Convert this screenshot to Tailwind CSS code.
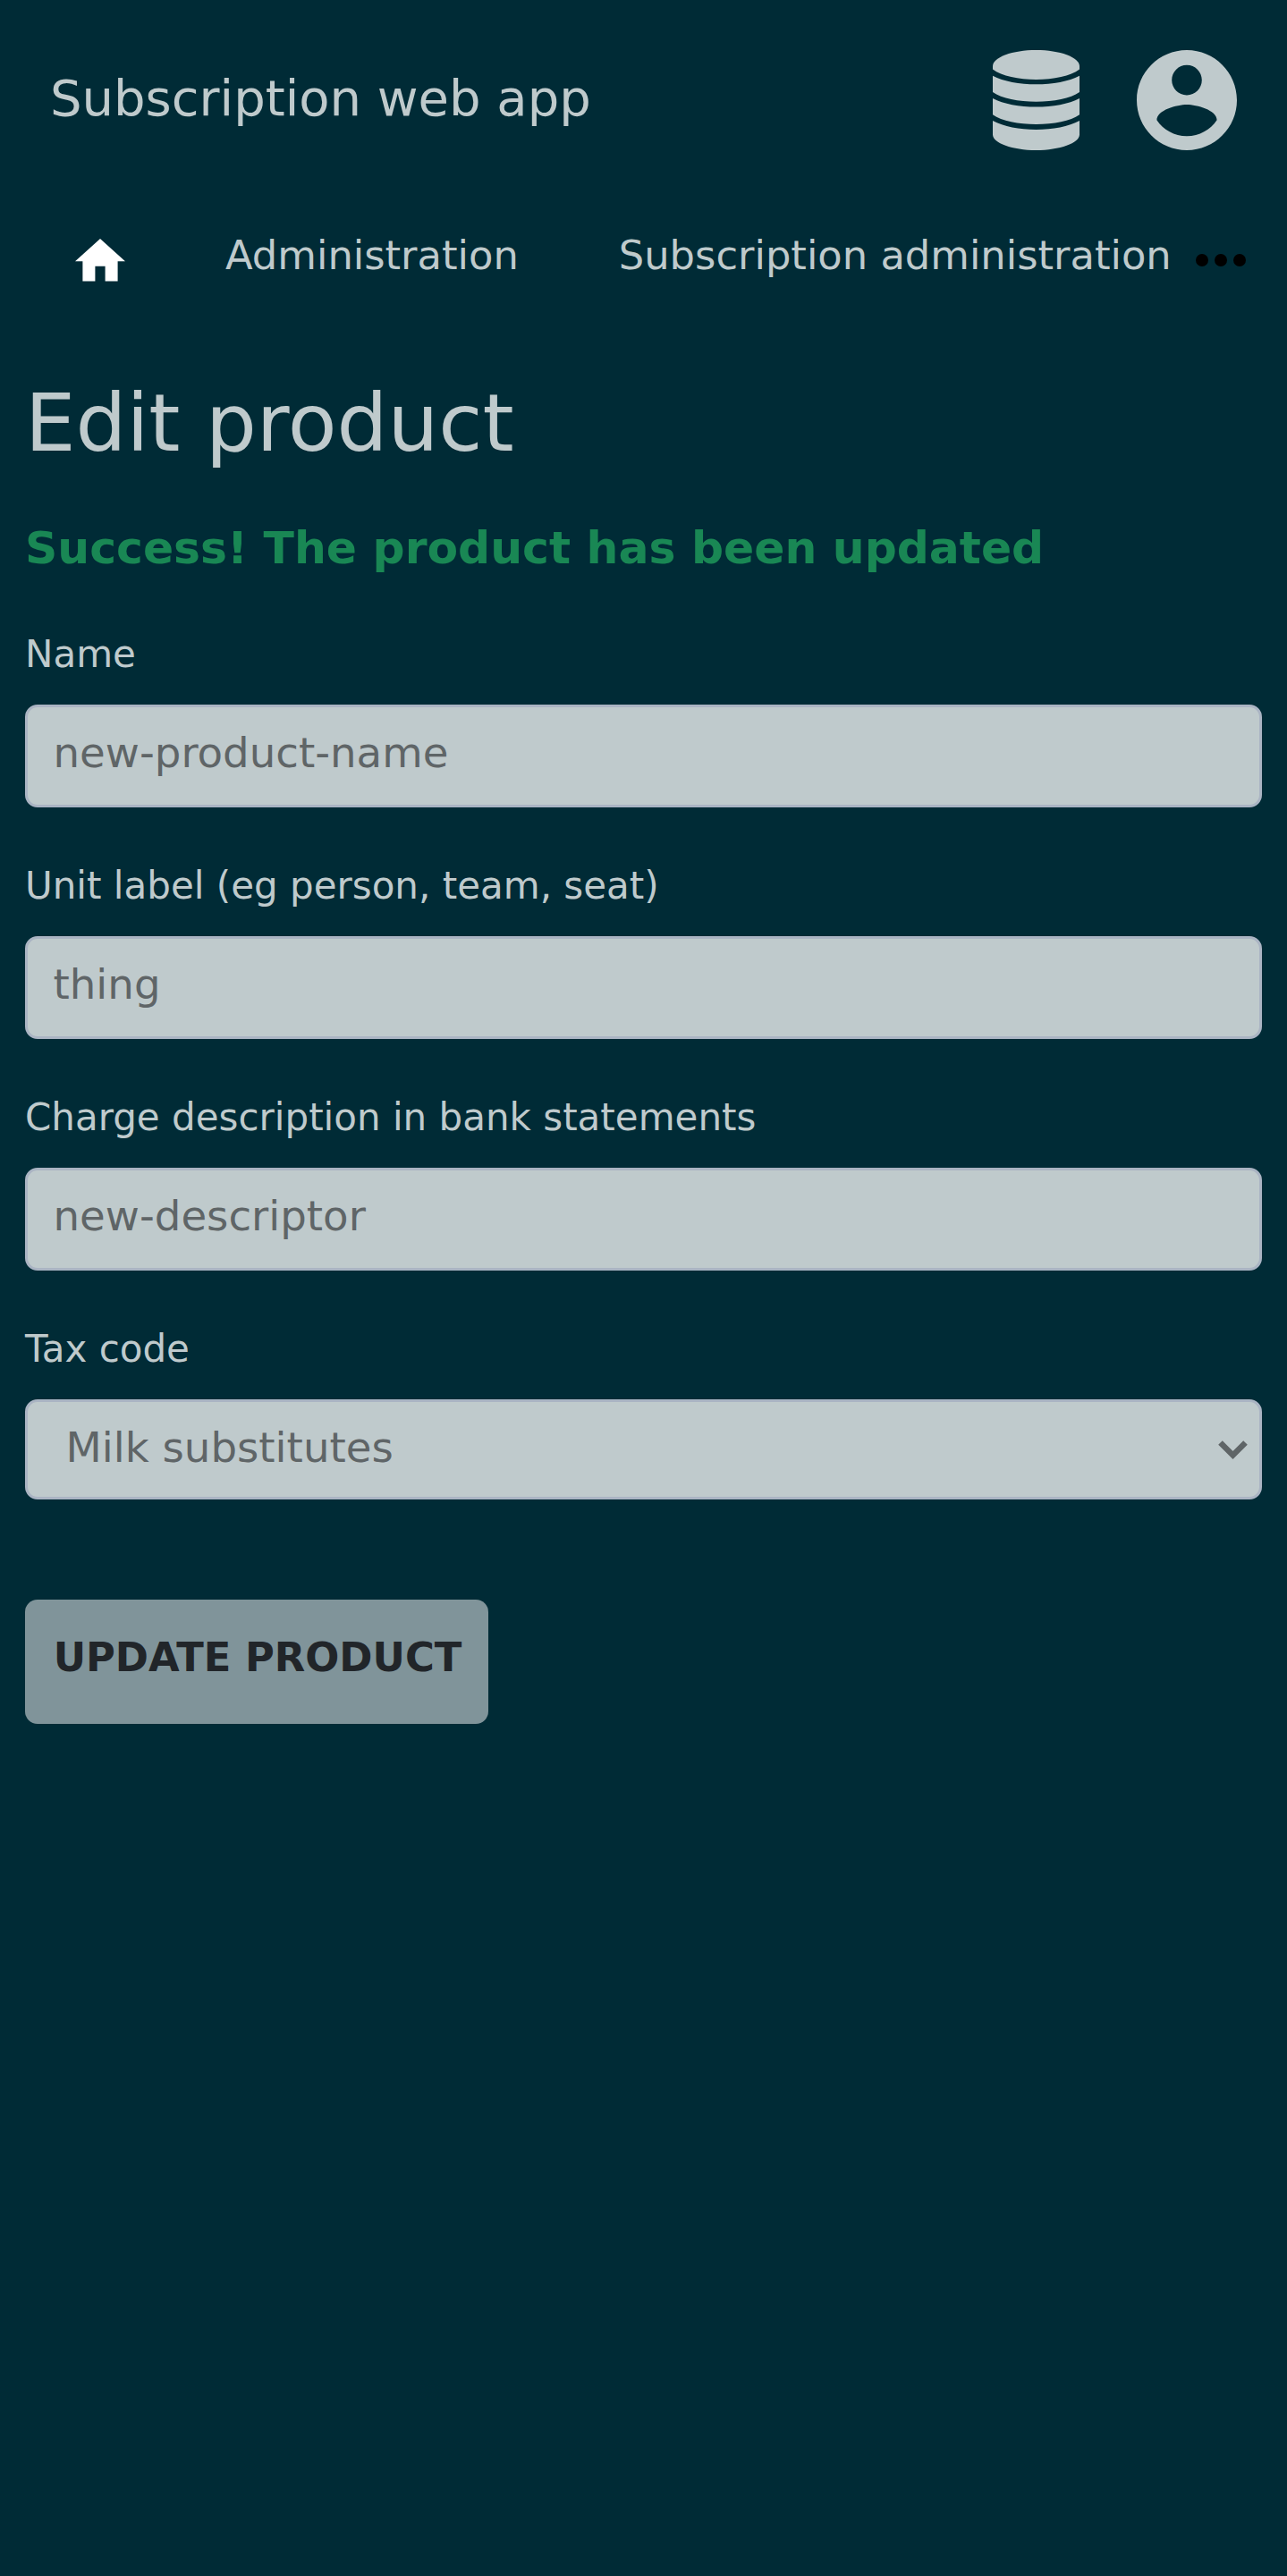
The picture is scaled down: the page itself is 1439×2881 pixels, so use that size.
<!DOCTYPE html>
<html lang="en">
<head>
<meta charset="utf-8">
<title>Subscription web app</title>
<script src="https://cdn.jsdelivr.net/npm/@tailwindcss/browser@4"></script>
</head>
<body class="min-h-screen bg-[#002b36] font-['DejaVu_Sans',sans-serif] text-[#bfcacc]">
<header class="flex h-[224px] items-center justify-between pl-14 pr-[56px]">
  <div class="pb-1 text-[56px] leading-[84px] whitespace-nowrap">Subscription web app</div>
  <div class="flex items-center gap-[63px]">
    <svg class="h-[112px] w-[98px]" viewBox="0 0 98 112" fill="currentColor"><path d="M0 18C0 8 22 0 48.500 0S97 8 97 18V21.500C87 29 68 33 48.500 33S10 29 0 21.500Z"/><path d="M0 28.700C12 35 30 38.300 48.500 38.300S85 35 97 28.700V47C87 54 68 57.800 48.500 57.800S10 54 0 47Z"/><path d="M0 54C12 60.300 30 63.600 48.500 63.600S85 60.300 97 54V72.200C87 79.200 68 83 48.500 83S10 79.200 0 72.200Z"/><path d="M0 79C12 85.500 30 89 48.500 89S85 85.500 97 79V94.500C97 104 75 112 48.500 112S0 104 0 94.500Z"/></svg>
    <svg class="size-[112px]" viewBox="2 2 20 20" fill="currentColor"><path d="M12 2C6.480 2 2 6.480 2 12s4.480 10 10 10 10-4.480 10-10S17.520 2 12 2zm0 3c1.660 0 3 1.340 3 3s-1.340 3-3 3-3-1.340-3-3 1.340-3 3-3zm0 14.200c-2.500 0-4.710-1.280-6-3.220.03-1.990 4-3.080 6-3.080 1.990 0 5.970 1.090 6 3.080-1.290 1.940-3.500 3.220-6 3.220z"/></svg>
  </div>
</header>
<nav class="flex h-[133px] items-start pl-[84px] text-[44.8px] leading-[68px] whitespace-nowrap">
  <svg class="mt-[43px] h-[48px] w-[56px] shrink-0 text-white" viewBox="2 3 20 17.143" fill="currentColor"><path d="M10 20v-6h4v6h5v-8h3L12 3 2 12h3v8z"/></svg>
  <a class="mt-7 ml-28">Administration</a>
  <a class="mt-7 ml-28">Subscription administration</a>
  <svg class="mt-[59px] ml-[27px] h-4 w-[56px] shrink-0 text-black" viewBox="0 0 56 16" fill="currentColor"><circle cx="7" cy="8" r="7"/><circle cx="28" cy="8" r="7"/><circle cx="49" cy="8" r="7"/></svg>
</nav>
<main class="px-7">
  <h1 class="pt-[62px] text-[89.6px] leading-[108px]">Edit product</h1>
  <p class="mt-[48px] text-[50.4px] leading-[75px] font-bold text-[#198754]">Success! The product has been updated</p>
  <form class="mt-[50px]">
    <label class="block text-[42px] leading-[64px]">Name</label>
    <div class="mt-6 mb-[56px] flex h-[115px] items-center rounded-[14px] border-[3px] border-[#aab4c3] bg-[#bfcacc] px-[28.5px] pb-[7px] text-[46.67px] leading-[70px] text-[#5f6567]">new-product-name</div>
    <label class="block text-[42px] leading-[64px]">Unit label (eg person, team, seat)</label>
    <div class="mt-6 mb-[56px] flex h-[115px] items-center rounded-[14px] border-[3px] border-[#aab4c3] bg-[#bfcacc] px-[28.5px] pb-[7px] text-[46.67px] leading-[70px] text-[#5f6567]">thing</div>
    <label class="block text-[42px] leading-[64px]">Charge description in bank statements</label>
    <div class="mt-6 mb-[56px] flex h-[115px] items-center rounded-[14px] border-[3px] border-[#aab4c3] bg-[#bfcacc] px-[28.5px] pb-[7px] text-[46.67px] leading-[70px] text-[#5f6567]">new-descriptor</div>
    <label class="block text-[42px] leading-[64px]">Tax code</label>
    <div class="mt-6 flex h-[112px] items-center justify-between rounded-[14px] border-[3px] border-[#aab4c3] bg-[#bfcacc] pl-[42.5px] pr-[13px] text-[46.67px] leading-[70px] text-[#5f6567]"><span class="pb-1">Milk substitutes</span>
      <svg class="mt-[2px] h-[22px] w-[33px]" viewBox="0 0 33 22" fill="none" stroke="currentColor" stroke-width="6.500"><path d="M2.500 2.500 16.500 16.500 30.500 2.500"/></svg></div>
    <button type="button" class="mt-[112px] flex h-[139px] w-[518px] items-center justify-center rounded-[14px] bg-[#80949a] pb-[10px] pl-[2px] text-[44.8px] leading-[68px] font-bold whitespace-nowrap text-[#212529]">UPDATE PRODUCT</button>
  </form>
</main>
</body>
</html>
